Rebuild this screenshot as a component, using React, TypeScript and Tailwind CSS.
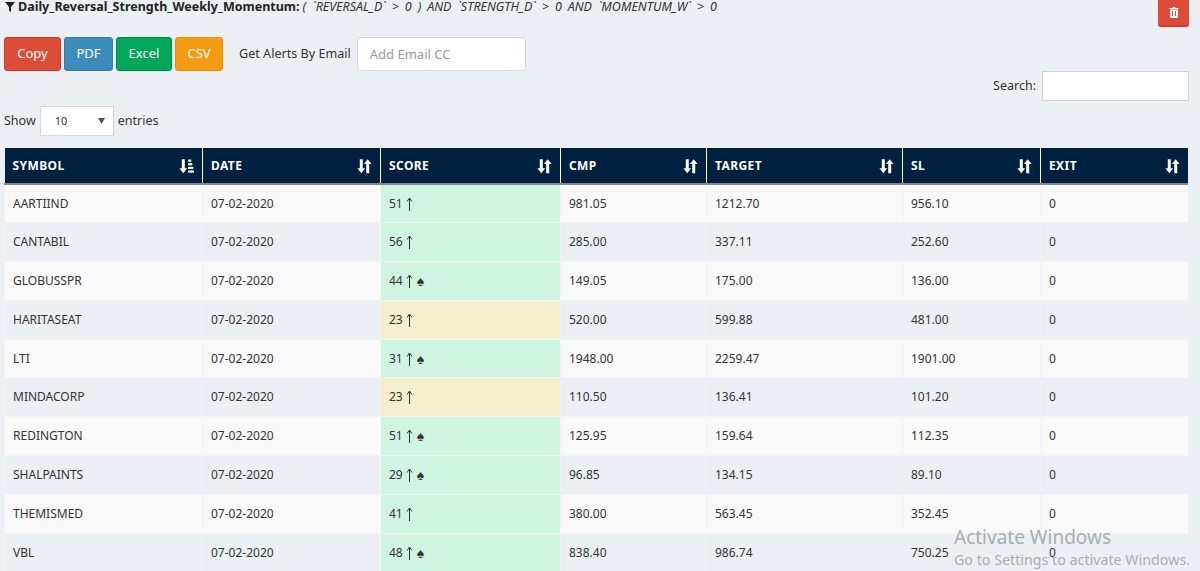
import React from "react";

const rows: [string, string, number, boolean, string, string, string, string][] = [
  ["AARTIIND", "07-02-2020", 51, false, "981.05", "1212.70", "956.10", "0"],
  ["CANTABIL", "07-02-2020", 56, false, "285.00", "337.11", "252.60", "0"],
  ["GLOBUSSPR", "07-02-2020", 44, true, "149.05", "175.00", "136.00", "0"],
  ["HARITASEAT", "07-02-2020", 23, false, "520.00", "599.88", "481.00", "0"],
  ["LTI", "07-02-2020", 31, true, "1948.00", "2259.47", "1901.00", "0"],
  ["MINDACORP", "07-02-2020", 23, false, "110.50", "136.41", "101.20", "0"],
  ["REDINGTON", "07-02-2020", 51, true, "125.95", "159.64", "112.35", "0"],
  ["SHALPAINTS", "07-02-2020", 29, true, "96.85", "134.15", "89.10", "0"],
  ["THEMISMED", "07-02-2020", 41, false, "380.00", "563.45", "352.45", "0"],
  ["VBL", "07-02-2020", 48, true, "838.40", "986.74", "750.25", "0"],
];

const headers: [string, number][] = [
  ["SYMBOL", 198], ["DATE", 178], ["SCORE", 180], ["CMP", 146], ["TARGET", 196], ["SL", 138], ["EXIT", 147],
];

function SortIcon({ active }: { active: boolean }) {
  return (
    <svg width="15" height="16" viewBox="0 0 14 14" fill="white" className="shrink-0">
      <path d="M2.6 0.6h2.8v8.6H7.6L4 13.8 0.4 9.2H2.6z" />
      {active ? (
        <>
          <rect x="8.4" y="1" width="3" height="2" />
          <rect x="8.4" y="4.4" width="4" height="2" />
          <rect x="8.4" y="7.8" width="5" height="2" />
          <rect x="8.4" y="11.2" width="5.6" height="2" />
        </>
      ) : (
        <path d="M8.6 13.8h2.8V5.2h2.2L10 0.6 6.4 5.2h2.2z" />
      )}
    </svg>
  );
}

function UpArrow() {
  return (
    <svg width="7" height="14" viewBox="0 0 7 14" fill="none" stroke="#333" className="inline-block">
      <path d="M3.5 14V1.5M1 4.5l2.5-3.5L6 4.5" strokeWidth="1" />
    </svg>
  );
}

export default function App() {
  return (
    <div className="relative h-[571px] w-[1200px] overflow-hidden bg-[#ecf0f5] font-['Noto_Sans','Open_Sans',sans-serif] text-[12px] text-[#333]">
      <div className="flex h-[27px] items-start justify-between pl-[5px] pr-[11px]">
        <div className="flex h-[14px] items-center gap-[3px] whitespace-nowrap text-[12.5px] leading-[14px]">
          <svg width="10" height="10" viewBox="0 0 10 10" fill="#222"><path d="M0 0h10L6 5v5L4 8.5V5z" /></svg>
          <span className="font-bold text-[#222]">Daily_Reversal_Strength_Weekly_Momentum:</span>
          <em className="text-[12.5px] text-[#333] [word-spacing:2.7px]">( `REVERSAL_D` &gt; 0 ) AND `STRENGTH_D` &gt; 0 AND `MOMENTUM_W` &gt; 0</em>
        </div>
        <button className="flex h-[27px] w-[31px] items-center justify-center rounded-b-[3px] border-b-2 border-[#d73925] bg-[#dd4b39]">
          <svg width="10" height="11" viewBox="0 0 10 11" fill="white"><path d="M1 2.6h8V10a1 1 0 0 1-1 1H2a1 1 0 0 1-1-1z M0.4 1h3L4 0h2l.6 1h3v1H.4z M3 4v5h1V4z M6 4v5h1V4z" fillRule="evenodd" /></svg>
        </button>
      </div>

      <div className="mt-[10px] flex items-center pl-1">
        <div className="flex gap-[3px]">
          <button className="h-[34px] w-[57px] rounded-[3px] border border-[#d73925] bg-[#dd4b39] text-[13px] text-white">Copy</button>
          <button className="h-[34px] w-[49px] rounded-[3px] border border-[#367fa9] bg-[#3c8dbc] text-[13px] text-white">PDF</button>
          <button className="h-[34px] w-[56px] rounded-[3px] border border-[#008d4c] bg-[#00a65a] text-[13px] text-white">Excel</button>
          <button className="h-[34px] w-[48px] rounded-[3px] border border-[#e08e0b] bg-[#f39c12] text-[13px] text-white">CSV</button>
        </div>
        <span className="ml-[16px] text-[12.6px] text-[#333]">Get Alerts By Email</span>
        <input
          readOnly
          placeholder="Add Email CC"
          className="ml-[6px] h-[34px] w-[169px] rounded-[3px] border border-[#d2d6de] bg-white px-3 text-[13px] outline-none placeholder:text-[#999]"
        />
      </div>

      <div className="flex items-center justify-end pr-[11px]">
        <span className="mr-[6px] text-[12.5px]">Search:</span>
        <input readOnly className="h-[30px] w-[147px] border border-[#d2d6de] bg-white outline-none" />
      </div>

      <div className="mt-[5px] flex items-center pl-1 text-[12.5px]">
        <span>Show</span>
        <div className="mx-[4px] flex h-[30px] w-[74px] items-center justify-between border border-[#d2d6de] bg-white pl-[14px] pr-[8px] text-[11px]">
          <span>10</span>
          <svg width="7" height="6" viewBox="0 0 7 6" fill="#555"><path d="M0 0h7L3.5 6z" /></svg>
        </div>
        <span>entries</span>
      </div>

      <table className="ml-[4px] mt-[12px] w-[1183px] table-fixed border-collapse">
        <colgroup>
          {headers.map(([h, w]) => (
            <col key={h} style={{ width: w }} />
          ))}
        </colgroup>
        <thead>
          <tr className="h-[36px] bg-[#002040]">
            {headers.map(([h], i) => (
              <th key={h} className={`border-b-2 border-b-[#888] px-2 text-left text-[12px] font-bold tracking-[0.4px] text-white ${i > 0 ? "border-l border-l-white" : ""}`}>
                <div className="flex items-center justify-between">
                  <span>{h}</span>
                  <SortIcon active={i === 0} />
                </div>
              </th>
            ))}
          </tr>
        </thead>
        <tbody>
          {rows.map((r, idx) => {
            const bg = idx % 2 === 0 ? "bg-[#f9f9f9]" : "bg-[#ecf0f5]";
            const scoreBg = r[2] === 23 ? "bg-[#f5eecd]" : "bg-[#cff5e2]";
            const cell = "border-b border-l border-[#f1f3f6] px-2 align-middle";
            return (
              <tr key={r[0]} className={`h-[38.8px] ${bg}`}>
                <td className={cell}>{r[0]}</td>
                <td className={cell}>{r[1]}</td>
                <td className={`${cell} ${scoreBg}`}>
                  <span className="inline-flex items-center gap-[3px]">
                    {r[2]} <UpArrow />
                    {r[3] ? <span className="ml-[1px] text-[14px] leading-none">♠</span> : null}
                  </span>
                </td>
                <td className={cell}>{r[4]}</td>
                <td className={cell}>{r[5]}</td>
                <td className={cell}>{r[6]}</td>
                <td className={cell}>{r[7]}</td>
              </tr>
            );
          })}
        </tbody>
      </table>

      <div className="pointer-events-none absolute left-[954px] top-[525px] text-[#a9adb1]">
        <div className="text-[19px] leading-[24px]">Activate Windows</div>
        <div className="text-[14.25px] leading-[22px]">Go to Settings to activate Windows.</div>
      </div>
    </div>
  );
}
